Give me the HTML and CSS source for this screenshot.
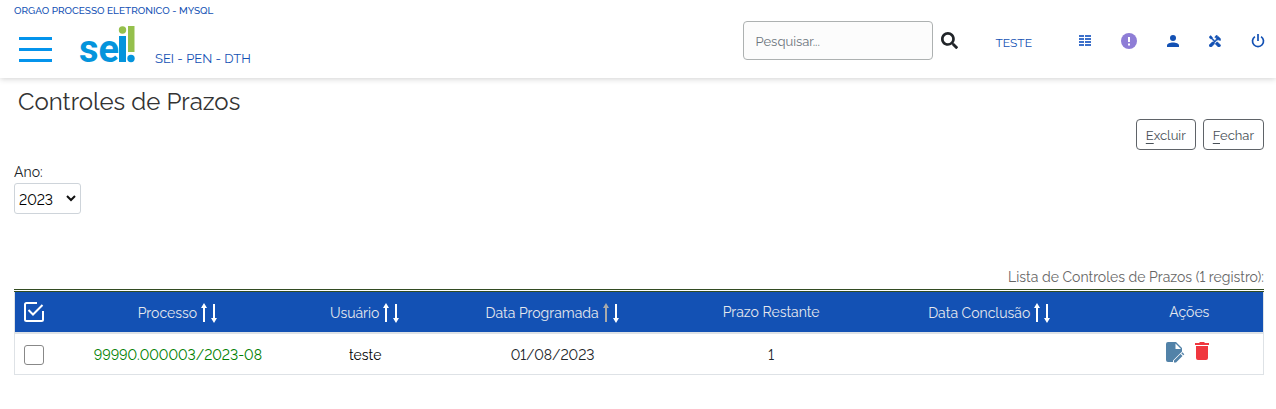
FILE: index.html
```html
<!DOCTYPE html>
<html lang="pt-BR">
<head>
<meta charset="utf-8">
<title>SEI - Controles de Prazos</title>
<link rel="stylesheet" href="styles.css">
</head>
<body>
<svg class="defs" aria-hidden="true">
  <symbol id="sort" viewBox="0 0 18 20">
    <path class="up" d="M3 19V5H1L4 0l3 5H5v14z"/>
    <path class="down" d="M13 1h2v14h2l-3 5-3-5h2z"/>
  </symbol>
</svg>
<header class="topbar">
  <div class="org">ORGAO PROCESSO ELETRONICO - MYSQL</div>
  <div class="bar">
    <div class="brand">
      <button class="menu" type="button" aria-label="Menu"><span></span><span></span><span></span></button>
      <svg class="logo" width="56" height="44" viewBox="0 0 56 44" role="img" aria-label="sei!">
        <text x="0" y="37" class="logo-text">se</text>
        <path fill="#0494dc" d="M40 11h7v26h-7z"/>
        <circle cx="43.500" cy="5" r="3.700" fill="#95c04c"/>
        <path fill="#95c04c" d="M49 1h6.500v26H49z"/>
        <circle cx="52" cy="33.500" r="3.700" fill="#0494dc"/>
      </svg>
      <span class="system">SEI - PEN - DTH</span>
    </div>
    <form class="search">
      <input type="text" placeholder="Pesquisar..." aria-label="Pesquisar">
      <button type="button" aria-label="Buscar">
        <svg width="17" height="17" viewBox="0 0 512 512"><path fill="#212529" d="M505 442.700 405.300 343c-4.500-4.500-10.600-7-17-7H372c27.600-35.300 44-79.700 44-128C416 93.100 322.900 0 208 0S0 93.100 0 208s93.100 208 208 208c48.300 0 92.700-16.400 128-44v16.300c0 6.400 2.500 12.500 7 17l99.700 99.700c9.400 9.400 24.600 9.400 33.900 0l28.300-28.300c9.400-9.400 9.400-24.600.1-34zM208 336c-70.700 0-128-57.200-128-128 0-70.700 57.200-128 128-128 70.700 0 128 57.200 128 128 0 70.700-57.200 128-128 128z"/></svg>
      </button>
    </form>
    <nav class="tools">
      <a class="unit" href="#">TESTE</a>
      <a href="#" aria-label="Controle de Processos"><svg width="12" height="12" viewBox="0 0 12 12"><path fill="#3c70ca" d="M0 0h5v2H0zM6 0h6v2H6zM0 3h5v2H0zM6 3h6v2H6zM0 6h5v2H0zM6 6h6v2H6zM0 9h5v2H0zM6 9h6v2H6z"/></svg></a>
      <a href="#" aria-label="Novidades"><svg width="16" height="16" viewBox="0 0 16 16"><circle cx="8" cy="8" r="8" fill="#8e7dd6"/><path fill="#fff" d="M7 4h2v5H7zM7 10.500h2v2H7z"/></svg></a>
      <a href="#" aria-label="Usuário"><svg width="12" height="12" viewBox="0 0 12 12"><circle cx="6" cy="3" r="3" fill="#1351b4"/><path fill="#1351b4" d="M0 12v-1.500C0 8.500 3 7.500 6 7.500s6 1 6 3V12z"/></svg></a>
      <a href="#" aria-label="Configurações"><svg width="12" height="12" viewBox="2 1 20.500 20.500"><path fill="#1351b4" stroke="#1351b4" d="m21.670 18.170-5.300-5.300h-.99l-2.540 2.540v.99l5.300 5.300c.39.390 1.020.390 1.410 0l2.120-2.120a1 1 0 0 0 0-1.410zM17.340 10.190l1.410-1.410 2.120 2.120a3 3 0 0 0 0-4.240l-3.540-3.540-1.410 1.410V1.710L15.220 1l-3.540 3.540.71.710h2.830l-1.410 1.410 1.060 1.060-2.890 2.890-4.130-4.130V5.060L4.830 2.040 2 4.870l3.030 3.020h1.410l4.130 4.130-.85.850H7.600l-5.300 5.300a1 1 0 0 0 0 1.410l2.120 2.120c.39.390 1.020.390 1.410 0l5.300-5.300v-2.120l5.150-5.150z"/></svg></a>
      <a href="#" aria-label="Sair"><svg width="14" height="14" viewBox="0 0 14 14" fill="none" stroke="#1351b4" stroke-width="1.700"><path d="M7 0v7M3.900 2.600a5.500 5.500 0 1 0 6.200 0"/></svg></a>
    </nav>
  </div>
</header>
<main class="content">
  <h1>Controles de Prazos</h1>
  <div class="commands">
    <button type="button" accesskey="E"><u>E</u>xcluir</button>
    <button type="button" accesskey="F"><u>F</u>echar</button>
  </div>
  <div class="filter">
    <label for="ano">Ano:</label>
    <div class="select">
      <select id="ano"><option>2023</option></select>
      <svg width="10" height="7" viewBox="0 0 10 7" fill="none" stroke="#111" stroke-width="2"><path d="M1 1l4 4 4-4"/></svg>
    </div>
  </div>
  <table>
    <caption>Lista de Controles de Prazos (1 registro):</caption>
    <colgroup><col class="w3"><col class="w20"><col class="w10"><col class="w20"><col class="w15"><col class="w20"><col class="w12"></colgroup>
    <thead>
      <tr>
        <th><svg class="all" width="20" height="20" viewBox="0 0 20 20" fill="none" stroke="#fff" stroke-width="2"><path d="M13 1H2.500Q1 1 1 2.500v15Q1 19 2.500 19h15q1.500 0 1.500-1.500V9M4.500 8l4.500 4.500L18.500 3"/></svg></th>
        <th><span class="head">Processo <svg class="sort"><use href="#sort"/></svg></span></th>
        <th><span class="head">Usuário <svg class="sort"><use href="#sort"/></svg></span></th>
        <th><span class="head">Data Programada <svg class="sort sorted"><use href="#sort"/></svg></span></th>
        <th>Prazo Restante</th>
        <th><span class="head">Data Conclusão <svg class="sort"><use href="#sort"/></svg></span></th>
        <th>Ações</th>
      </tr>
    </thead>
    <tbody>
      <tr>
        <td><input type="checkbox" aria-label="Selecionar 99990.000003/2023-08"></td>
        <td><a class="process" href="#">99990.000003/2023-08</a></td>
        <td><a class="user" href="#">teste</a></td>
        <td>01/08/2023</td>
        <td>1</td>
        <td></td>
        <td>
          <div class="actions">
            <a href="#" aria-label="Alterar"><svg width="19" height="21" viewBox="0 0 19 21"><path fill="#5282a8" d="M2 0h8l6 6v3.500l-9 9V20H2q-2 0-2-2V2q0-2 2-2z"/><path fill="#fff" d="M9.500 1.500V7H15z"/><path fill="#5282a8" d="M8 18.500 14.500 12l2 2L10 20.500H8zM15.300 11.200l1-1 2 2-1 1z"/></svg></a>
            <a href="#" aria-label="Excluir"><svg width="14" height="18" viewBox="0 0 14 18"><path fill="#f0373f" d="M0 1h4l1-1h4l1 1h4v2H0zM1 4h12v12q0 2-2 2H3q-2 0-2-2z"/></svg></a>
          </div>
        </td>
      </tr>
    </tbody>
  </table>
</main>
</body>
</html>
```
FILE: styles.css
```css
* { box-sizing: border-box; }
body { margin: 0; background: #fff; color: #212529; font-family: Raleway, Lato, "Open Sans", sans-serif; font-size: 14px; font-variant-numeric: lining-nums; line-height: 20px; }
a { text-decoration: none; }
button { font: inherit; cursor: pointer; }
.defs { position: absolute; width: 0; height: 0; }

.topbar { height: 78px; padding: 4px 11px 0 14px; background: #fff; box-shadow: 0 1px 6px rgba(0, 0, 0, .18); }
.org { color: #1351b4; font-size: 10px; font-weight: 500; line-height: 13px; }
.bar { display: flex; align-items: flex-start; padding-top: 4px; }
.brand { display: flex; flex: 1; align-items: flex-start; padding-top: 4px; }
.menu { display: flex; flex-direction: column; gap: 8px; margin: 12px 27px 0 5px; padding: 0; border: 0; background: none; }
.menu span { width: 33px; height: 3px; background: #0494ec; }
.logo { flex: none; overflow: visible; }
.logo-text { fill: #0494dc; font-family: Roboto, sans-serif; font-size: 38px; font-weight: 700; }
.system { margin: 24px 0 0 20px; color: #1351b4; font-size: 13px; }

.search { display: flex; align-items: center; gap: 8px; }
.search input { width: 190px; height: 39px; padding: 2px 12px 0; border: 1px solid #adb1b1; border-radius: 4px; background: #fcfcfc; color: #495057; font: inherit; font-size: 13px; }
.search input::placeholder { color: #6c757d; opacity: 1; }
.search button { display: flex; padding: 0; border: 0; background: none; }
.tools { display: flex; align-items: center; gap: 30px; margin-left: 38px; height: 40px; }
.tools a { display: flex; color: #1351b4; }
.tools .unit { margin-right: 17px; padding-top: 3px; font-size: 12px; }

.content { padding: 10px 12px 20px 14px; }
h1 { margin: 0 0 0 4px; font-size: 24px; font-weight: 400; line-height: 28px; color: #333; }
.commands { display: flex; justify-content: flex-end; gap: 7px; margin-top: 3px; }
.commands button { height: 31px; padding: 2px 9px 0; border: 1px solid #5f6368; border-radius: 4px; background: #fff; color: #495057; font-size: 13px; }
.commands u { text-underline-offset: 3px; }
.filter { margin-top: 12px; }
.filter label { display: block; line-height: 21px; }
.select { display: inline-grid; align-items: center; }
.select select { grid-area: 1 / 1; width: 67px; height: 31px; padding: 2px 4px 0; appearance: none; border: 1px solid #ced4da; border-radius: 3px; background: #fff; color: #000; font: inherit; font-variant-numeric: lining-nums; }
.select svg { grid-area: 1 / 1; justify-self: end; margin-right: 5px; pointer-events: none; }

table { width: 100%; margin-top: 53px; table-layout: fixed; border-collapse: collapse; border: 1px solid #dee2e6; }
caption { padding-bottom: 2px; color: #666; text-align: right; }
.w3 { width: 3%; } .w10 { width: 10%; } .w12 { width: 12%; } .w15 { width: 15%; } .w20 { width: 20%; }
thead { border-top: 3px double #334c22; }
th { height: 42px; padding: 0 0 0 2px; background: #1351b4; color: #e5e8ee; font-weight: 400; border-bottom: 2px solid #dee2e6; }
td { height: 42px; padding: 3px 0 0 2px; text-align: center; }
.head { display: inline-flex; align-items: center; gap: 3px; padding-top: 2px; }
.sort { width: 18px; height: 20px; fill: #fff; }
.sorted { --up: #aaa; }
.up { fill: var(--up, #fff); }
.all { display: block; margin: 0 auto; }
td input { display: block; width: 20px; height: 20px; margin: 0 auto; appearance: none; border: 1px solid #888; border-radius: 3px; background: #fff; }
.process { color: #008000; }
.user { color: #000; }
.actions { display: flex; justify-content: center; gap: 10px; padding: 0 4px 6px 0; }
.actions a { display: flex; }
```
